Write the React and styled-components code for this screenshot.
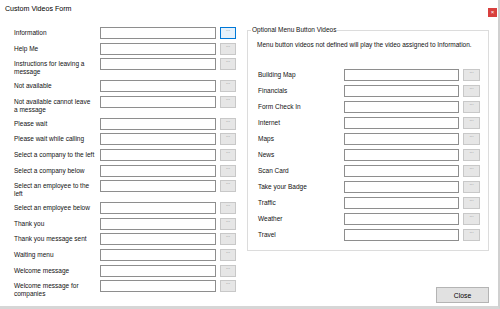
import React from 'react';
import styled, { createGlobalStyle } from 'styled-components';

const GlobalStyle = createGlobalStyle`
  html, body {
    margin: 0;
    padding: 0;
    background: #ffffff;
  }
  * {
    box-sizing: border-box;
  }
`;

const leftVideos = [
  'Information',
  'Help Me',
  'Instructions for leaving a\nmessage',
  'Not available',
  'Not available cannot leave\na message',
  'Please wait',
  'Please wait while calling',
  'Select a company to the left',
  'Select a company below',
  'Select an employee to the\nleft',
  'Select an employee below',
  'Thank you',
  'Thank you message sent',
  'Waiting menu',
  'Welcome message',
  'Welcome message for\ncompanies',
];

const menuVideos = [
  'Building Map',
  'Financials',
  'Form Check In',
  'Internet',
  'Maps',
  'News',
  'Scan Card',
  'Take your Badge',
  'Traffic',
  'Weather',
  'Travel',
];

const App = () => {
  return (
    <>
      <GlobalStyle />
      <Window>
        <TitleBar>
          <Title>Custom Videos Form</Title>
          <CloseBox>×</CloseBox>
        </TitleBar>
        <Body>
          <LeftColumn>
            {leftVideos.map((name, i) => (
              <Row key={name} $buttonWidth={16}>
                <Label $lineHeight={8.2}>{name}</Label>
                <PathInput type="text" />
                <BrowseButton $focused={i === 0}>...</BrowseButton>
              </Row>
            ))}
          </LeftColumn>
          <RightColumn>
            <GroupBox>
              <Legend>Optional Menu Button Videos</Legend>
              <GroupContent>
                <Note>
                  Menu button videos not defined will play the video assigned to Information.
                </Note>
                <MenuList>
                  {menuVideos.map((name) => (
                    <Row key={name} $buttonWidth={17}>
                      <Label $lineHeight={8}>{name}</Label>
                      <PathInput type="text" />
                      <BrowseButton>...</BrowseButton>
                    </Row>
                  ))}
                </MenuList>
              </GroupContent>
            </GroupBox>
            <CloseButton>Close</CloseButton>
          </RightColumn>
        </Body>
      </Window>
    </>
  );
};

const Window = styled.div`
  width: 500px;
  height: 309px;
  display: flex;
  flex-direction: column;
  background: #ffffff;
  border-right: 2px solid #d0d0d0;
  border-bottom: 3px solid #d6d6d6;
  font-family: "Liberation Sans", Arial, sans-serif;
  color: #111111;
`;

const TitleBar = styled.div`
  height: 26px;
  flex: none;
  display: flex;
  justify-content: space-between;
  align-items: flex-start;
  padding: 0 1px 0 5px;
`;

const Title = styled.div`
  font-size: 7.1px;
  line-height: 9px;
  padding-top: 5px;
  color: #000000;
`;

const CloseBox = styled.div`
  width: 9px;
  height: 9px;
  margin-top: 8px;
  background: #d8403e;
  color: #ffffff;
  font-size: 6px;
  line-height: 9px;
  text-align: center;
`;

const Body = styled.div`
  flex: 1;
  display: flex;
  gap: 11px;
  padding: 0 9px 3px 14px;
  min-height: 0;
`;

const LeftColumn = styled.div`
  width: 222px;
  display: flex;
  flex-direction: column;
  gap: 3.6px;
  padding-top: 1px;
`;

const Row = styled.div`
  display: grid;
  grid-template-columns: 82px 1fr ${(p) => p.$buttonWidth}px;
  column-gap: 4px;
  align-items: start;
`;

const Label = styled.div`
  font-size: 6.5px;
  line-height: ${(p) => p.$lineHeight}px;
  padding-top: 2px;
  white-space: pre;
  color: #111111;
`;

const PathInput = styled.input`
  height: 12px;
  width: 100%;
  margin: 0;
  padding: 0 2px;
  border: 1px solid #8e8e8e;
  background: #ffffff;
  font-family: inherit;
  font-size: 6.5px;
  outline: none;
`;

const BrowseButton = styled.button`
  height: 12px;
  margin: 0;
  padding: 0 0 3px;
  border: 1px solid ${(p) => (p.$focused ? '#0078d7' : '#c8c8c8')};
  background: ${(p) => (p.$focused ? '#e5f1fb' : '#e6e6e6')};
  color: #7a7a7a;
  font-family: inherit;
  font-size: 5px;
  line-height: 12px;
  display: flex;
  align-items: flex-end;
  justify-content: center;
`;

const RightColumn = styled.div`
  width: 242px;
  display: flex;
  flex-direction: column;
`;

const GroupBox = styled.fieldset`
  margin: 0;
  padding: 0 0 9px 3px;
  border: 1px solid #dcdcdc;
  min-width: 0;
`;

const Legend = styled.legend`
  padding: 0 1px;
  font-size: 6.5px;
  line-height: 8px;
  color: #111111;
`;

const GroupContent = styled.div`
  padding: 0 8px 0 7px;
`;

const Note = styled.div`
  margin: 7px 0 0 -1px;
  font-size: 6.5px;
  line-height: 8px;
  color: #111111;
`;

const MenuList = styled.div`
  display: flex;
  flex-direction: column;
  gap: 4px;
  margin-top: 20px;
`;

const CloseButton = styled.button`
  margin-top: auto;
  align-self: flex-end;
  width: 53px;
  height: 16px;
  padding: 0;
  border: 1px solid #b4b4b4;
  background: #e1e1e1;
  font-family: inherit;
  font-size: 6.8px;
  color: #000000;
`;

export default App;
